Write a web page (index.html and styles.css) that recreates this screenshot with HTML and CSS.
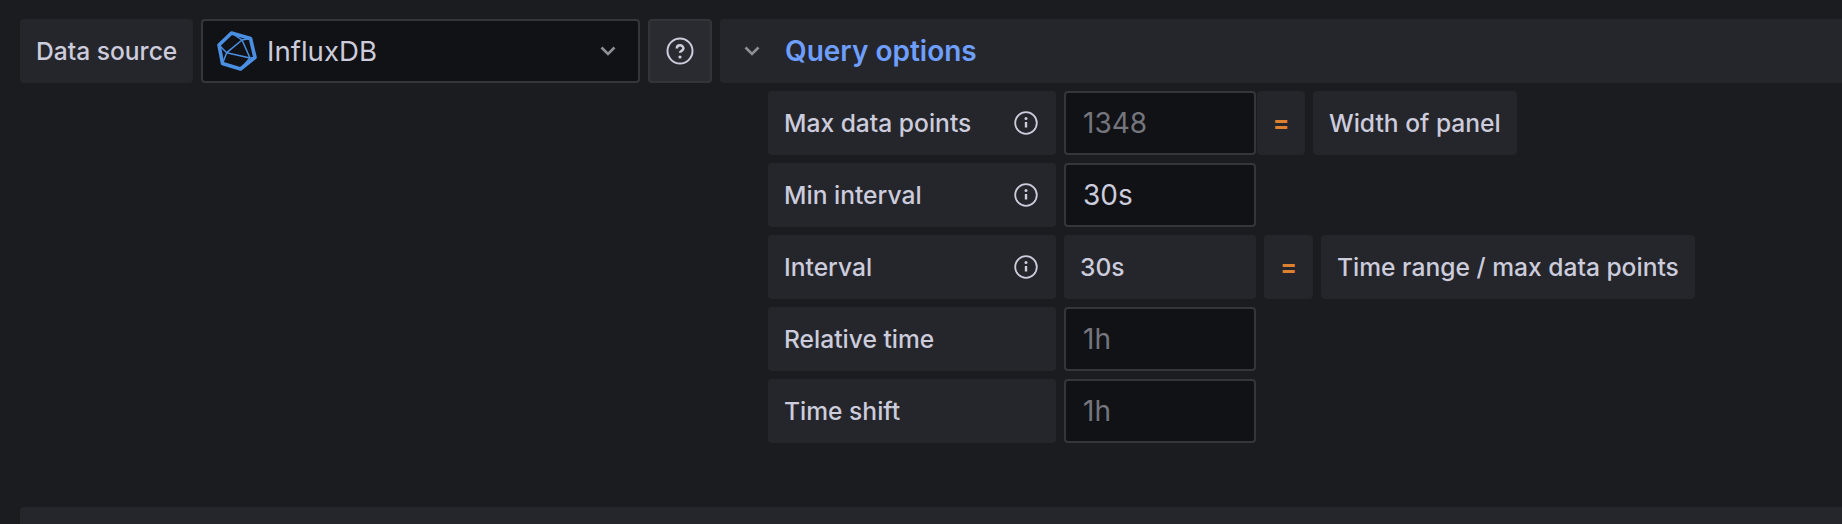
FILE: index.html
```html
<!DOCTYPE html>
<html lang="en">

<head>
    <meta charset="UTF-8">
    <title>Query options</title>
    <link rel="stylesheet" href="styles.css">
</head>

<body>
    <div class="top-row">
        <div class="label label-source">Data source</div>
        <div class="select">
            <svg class="ds-logo" viewBox="0 0 40 40" fill="none" stroke="#4b8fe2">
                <path d="M14.5 2 33.5 7.5 38 26.5 23.5 38 5.5 32.5 2 14Z" stroke-width="3.6" stroke-linejoin="round" />
                <path d="M14.5 2 25 9 33.5 7.5M25 9 9.7 21.7 2 14M25 9 33 27 38 26.5M9.7 21.7 33 27 23.5 38M9.7 21.7 5.5 32.5" stroke-width="1.5" />
            </svg>
            <span class="select-value">InfluxDB</span>
            <svg class="chevron" viewBox="0 0 16 10" fill="none" stroke="#8e8e96" stroke-width="2.6">
                <path d="M1.5 1.5 8 8 14.5 1.5" />
            </svg>
        </div>
        <div class="help-button">
            <svg class="help-icon" viewBox="0 0 28 28" fill="none" stroke="#ccccdc">
                <circle cx="14" cy="14" r="12.5" stroke-width="2" />
                <path d="M10.8 11.5c0-4.2 6.6-4.2 6.6 0 0 2.3-3.4 2.3-3.4 4.3" stroke-width="2.5" />
                <circle cx="14" cy="20" r="1.6" fill="#ccccdc" stroke="none" />
            </svg>
        </div>
        <div class="options-bar">
            <svg class="chevron options-chevron" viewBox="0 0 16 10" fill="none" stroke="#8e8e96" stroke-width="2.6">
                <path d="M1.5 1.5 8 8 14.5 1.5" />
            </svg>
            <span class="options-title">Query options</span>
        </div>
    </div>

    <div class="options">
        <div class="row">
            <div class="label label-wide">Max data points
                <svg class="info-icon" viewBox="0 0 24 24" fill="none" stroke="#ccccdc">
                    <circle cx="12" cy="12" r="10.8" stroke-width="1.8" />
                    <path d="M12 11v5.5" stroke-width="2.4" />
                    <circle cx="12" cy="7.6" r="1.5" fill="#ccccdc" stroke="none" />
                </svg>
            </div>
            <div class="input placeholder">1348</div>
            <div class="label equals equals-first">=</div>
            <div class="label">Width of panel</div>
        </div>
        <div class="row">
            <div class="label label-wide">Min interval
                <svg class="info-icon" viewBox="0 0 24 24" fill="none" stroke="#ccccdc">
                    <circle cx="12" cy="12" r="10.8" stroke-width="1.8" />
                    <path d="M12 11v5.5" stroke-width="2.4" />
                    <circle cx="12" cy="7.6" r="1.5" fill="#ccccdc" stroke="none" />
                </svg>
            </div>
            <div class="input">30s</div>
        </div>
        <div class="row">
            <div class="label label-wide">Interval
                <svg class="info-icon" viewBox="0 0 24 24" fill="none" stroke="#ccccdc">
                    <circle cx="12" cy="12" r="10.8" stroke-width="1.8" />
                    <path d="M12 11v5.5" stroke-width="2.4" />
                    <circle cx="12" cy="7.6" r="1.5" fill="#ccccdc" stroke="none" />
                </svg>
            </div>
            <div class="label label-value">30s</div>
            <div class="label equals">=</div>
            <div class="label">Time range / max data points</div>
        </div>
        <div class="row">
            <div class="label label-wide">Relative time</div>
            <div class="input placeholder">1h</div>
        </div>
        <div class="row">
            <div class="label label-wide">Time shift</div>
            <div class="input placeholder">1h</div>
        </div>
    </div>

    <div class="bottom-panel"></div>
</body>

</html>
```

FILE: styles.css
```css
body {
    margin: 0;
    height: 524px;
    overflow: hidden;
    box-sizing: border-box;
    padding: 19px 0 0 20px;
    background: #1b1c20;
    color: #ccccdc;
    font-family: Inter, sans-serif;
    font-size: 24.6px;
    font-weight: 550;
}

.top-row {
    display: flex;
    gap: 8px;
    height: 64px;
}

.label {
    display: flex;
    align-items: center;
    justify-content: space-between;
    box-sizing: border-box;
    height: 64px;
    padding: 0 16px;
    background: #25262b;
    border-radius: 4px;
    white-space: nowrap;
}

.label-source {
    width: 173px;
    padding-right: 0;
}

.select {
    display: flex;
    align-items: center;
    box-sizing: border-box;
    width: 439px;
    padding: 0 22px 0 14px;
    background: #111216;
    border: 2px solid #35363c;
    border-radius: 4px;
    font-weight: 400;
    font-size: 27.6px;
}

.ds-logo {
    width: 40px;
    height: 40px;
    margin-right: 10px;
}

.select-value {
    flex: 1;
}

.chevron {
    width: 16px;
    height: 10px;
}

.help-button {
    display: flex;
    align-items: center;
    justify-content: center;
    width: 64px;
    background: #2a2b30;
    border: 2px solid #33343a;
    border-radius: 4px;
    box-sizing: border-box;
}

.help-icon {
    width: 28px;
    height: 28px;
}

.options-bar {
    display: flex;
    align-items: center;
    flex: 1;
    padding-left: 24px;
    background: #25262b;
    border-radius: 4px 0 0 4px;
}

.options-chevron {
    margin-right: 25px;
}

.options-title {
    color: #6e9fff;
    font-size: 28px;
    font-weight: 600;
}

.options {
    display: flex;
    flex-direction: column;
    gap: 8px;
    margin: 8px 0 0 748px;
}

.row {
    display: flex;
    gap: 8px;
}

.label-wide {
    width: 288px;
    padding-right: 18px;
}

.info-icon {
    width: 24px;
    height: 24px;
}

.input {
    display: flex;
    align-items: center;
    box-sizing: border-box;
    width: 192px;
    height: 64px;
    padding: 0 17px;
    background: #111216;
    border: 2px solid #35363c;
    border-radius: 4px;
    font-size: 28px;
    font-weight: 400;
}

.placeholder {
    color: #74757d;
}

.label-value {
    width: 192px;
}

.equals {
    justify-content: center;
    width: 49px;
    padding: 0;
    color: #dd8030;
    font-weight: 700;
}

.equals-first {
    width: 48px;
    margin-left: -7px;
}

.bottom-panel {
    position: absolute;
    top: 507px;
    left: 20px;
    right: 0;
    bottom: 0;
    background: #25262b;
    border-radius: 4px 0 0 0;
}
```
